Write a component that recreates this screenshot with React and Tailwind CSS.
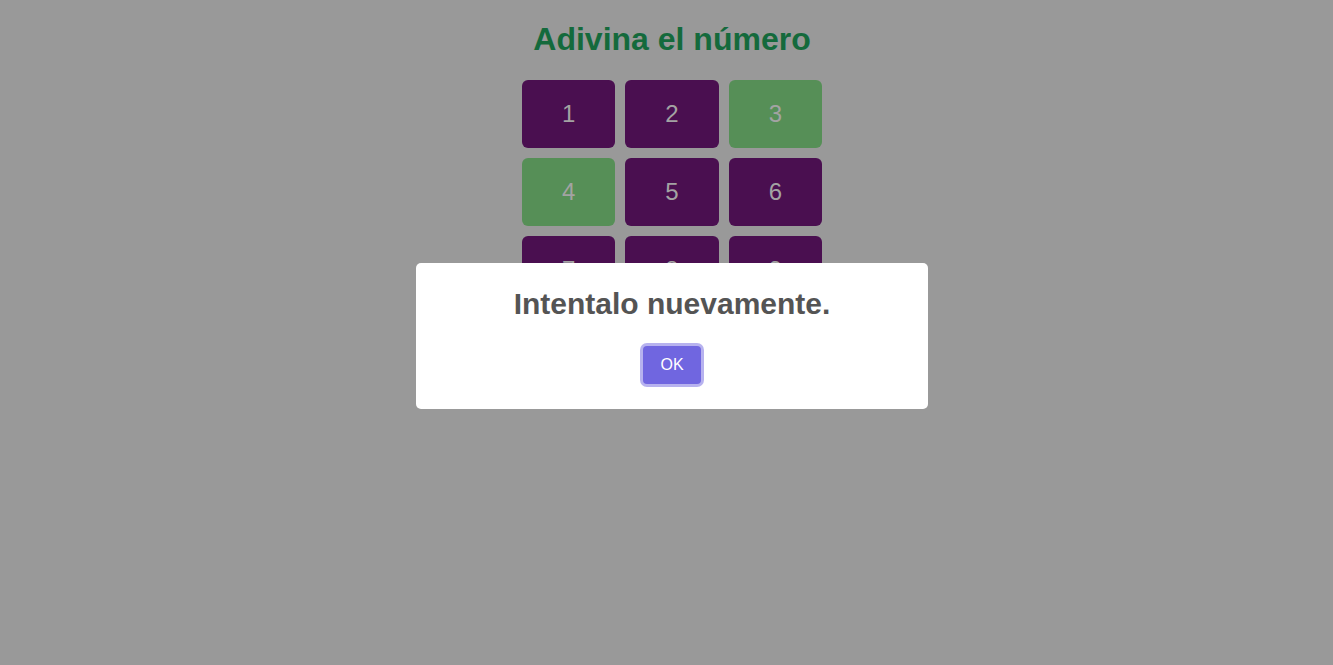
import React from 'react';

const numbers = [1, 2, 3, 4, 5, 6, 7, 8, 9];
const picked = [3, 4];

const App = () => {
  return (
    <div className="min-h-screen bg-[#999999] pl-[11px] font-['Liberation_Sans',Arial,sans-serif]">
      <div className="flex flex-col items-center">
        <h1 className="my-[21.44px] text-[32px] font-bold leading-[1.15] text-[#146a3c]">Adivina el número</h1>
        <div className="grid w-[300px] grid-cols-3 gap-[10px]">
          {numbers.map((n) => (
            <button
              key={n}
              className={
                picked.includes(n)
                  ? 'h-[68px] rounded-md bg-[#568f57] text-[24px] text-[#a3a3a3]'
                  : 'h-[68px] rounded-md bg-[#4a0f50] text-[24px] text-[#a3a3a3]'
              }
            >
              {n}
            </button>
          ))}
        </div>
      </div>

      {/* alert */}
      <div className="fixed inset-0 flex items-center justify-center pl-[11px] pt-[7px]">
        <div className="flex w-[512px] flex-col items-center rounded-[5px] bg-white pb-5">
          <h2 className="pt-6 text-[30px] font-bold leading-[1.15] text-[#545454]">Intentalo nuevamente.</h2>
          <div className="mt-5">
            <button className="m-[5px] rounded-[4px] bg-[#7066e0] px-[17.6px] py-[10px] text-base leading-[1.15] text-white shadow-[0_0_0_3px_rgba(112,102,224,0.5)]">
              OK
            </button>
          </div>
        </div>
      </div>
    </div>
  );
};

export default App;
